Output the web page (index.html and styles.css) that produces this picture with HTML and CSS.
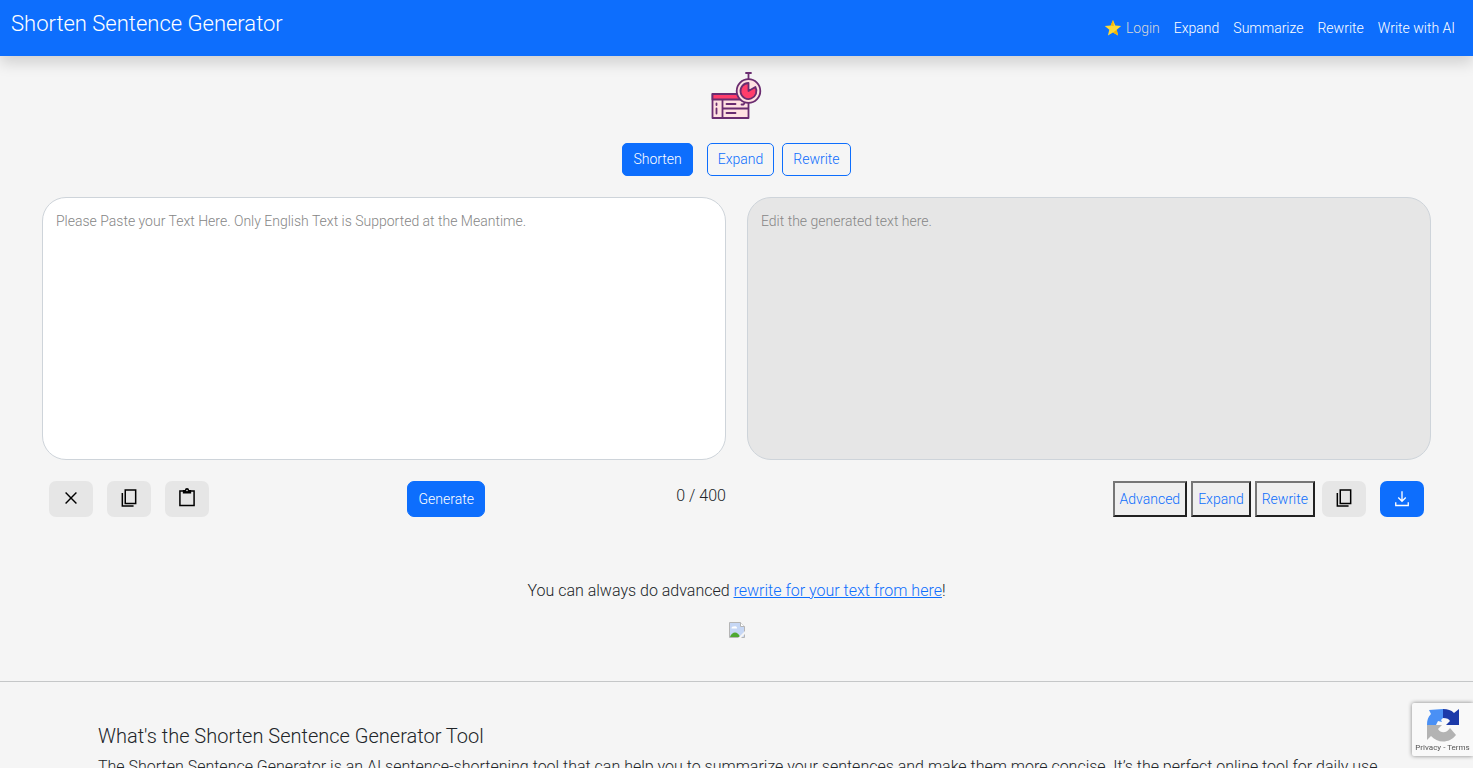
FILE: index.html
```html
<!DOCTYPE html>
<html lang="en">
<head>
  <meta charset="UTF-8">
  <meta name="viewport" content="width=device-width, initial-scale=1.0">
  <title>Shorten Sentence Generator</title>
  <link rel="stylesheet" href="styles.css">
</head>
<body>
  <header class="navbar">
    <a class="brand" href="#">Shorten Sentence Generator</a>
    <nav class="nav-links">
      <a class="login" href="#">
        <svg class="star" viewBox="0 0 18 18" aria-hidden="true"><path d="M9 1l2.3 5.4 5.9.5-4.5 3.8 1.4 5.8L9 13.4l-5.1 3.1 1.4-5.8L.8 6.9l5.9-.5z" fill="#fdd835"/><path d="M9 1l.8 5.900-3.100-.500zM12.700 10.700l1.400 5.800L9 13.400z" fill="#f4b400"/></svg>
        Login
      </a>
      <a href="#">Expand</a>
      <a href="#">Summarize</a>
      <a href="#">Rewrite</a>
      <a href="#">Write with AI</a>
    </nav>
  </header>

  <main>
    <svg class="logo" viewBox="0 0 52 50" aria-hidden="true">
      <g stroke="#6a2c70" stroke-width="1.8" stroke-linejoin="round">
        <path d="M1.500 24h36v24h-36z" fill="#ffe1e1"/>
        <path d="M1.500 24h36v5.500h-36z" fill="#ff3d6b"/>
        <path d="M11.500 29.500V48M11.500 38.500h26" fill="none"/>
        <path d="M5.500 33.500v1.500M5.500 38.500v5M15.500 34h9M15.500 43h9M30.500 34.500h2l1-1.500" fill="none" stroke-linecap="round"/>
        <path d="M37.500 9V3M35 3h5" fill="none" stroke-linecap="round"/>
        <circle cx="37.500" cy="21" r="11.800" fill="#ffe1e1"/>
        <path d="M37.500 21v-8a8 8 0 1 0 6.900 4z" fill="#ff3d6b"/>
      </g>
    </svg>

    <div class="modes">
      <button type="button" class="btn btn-primary">Shorten</button>
      <div class="mode-pair">
        <button type="button" class="btn btn-outline">Expand</button>
        <button type="button" class="btn btn-outline">Rewrite</button>
      </div>
    </div>

    <div class="editors">
      <section class="editor">
        <textarea class="text-box" id="inputText" aria-label="Text to shorten" placeholder="Please Paste your Text Here. Only English Text is Supported at the Meantime."></textarea>
        <div class="toolbar">
          <div class="tools">
            <button type="button" class="icon-btn" aria-label="Clear">
              <svg viewBox="0 0 24 24"><path d="M5.500 5.500l13 13M18.500 5.500l-13 13" stroke-width="1.700"/></svg>
            </button>
            <button type="button" class="icon-btn" aria-label="Copy">
              <svg viewBox="0 0 24 24"><path d="M7.500 2.500h12.500v16H7.500zM4 6v15.500h13.500" stroke-width="1.800"/></svg>
            </button>
            <button type="button" class="icon-btn" aria-label="Paste">
              <svg viewBox="0 0 24 24"><path d="M3.500 3.500h17v17.500h-17z" stroke-width="1.800"/><path d="M7 2.500h2.500a2.500 2.500 0 0 1 5 0H17v4H7z" fill="#000" stroke="none"/><circle cx="12" cy="3" r="1" fill="#e6e6e6" stroke="none"/></svg>
            </button>
          </div>
          <button type="button" class="btn btn-primary btn-tall">Generate</button>
          <span class="counter">0 / 400</span>
        </div>
      </section>

      <section class="editor">
        <textarea class="text-box text-box-result" id="outputText" aria-label="Generated text" placeholder="Edit the generated text here."></textarea>
        <div class="toolbar toolbar-end">
          <div class="actions">
            <button type="button" class="plain-btn">Advanced</button>
            <button type="button" class="plain-btn">Expand</button>
            <button type="button" class="plain-btn">Rewrite</button>
          </div>
          <div class="tools">
            <button type="button" class="icon-btn" aria-label="Copy result">
              <svg viewBox="0 0 24 24"><path d="M7.500 2.500h12.500v16H7.500zM4 6v15.500h13.500" stroke-width="1.800"/></svg>
            </button>
            <button type="button" class="icon-btn icon-btn-primary" aria-label="Download">
              <svg viewBox="0 0 24 24"><path d="M12 4v12M7.500 11.500l4.500 4.500 4.500-4.500M4.500 17v4h15v-4" stroke-width="1.600"/></svg>
            </button>
          </div>
        </div>
      </section>
    </div>

    <p class="hint">You can always do advanced <a href="#">rewrite for your text from here</a>!</p>
    <!-- missing banner placeholder -->
    <svg class="banner" viewBox="0 0 16 16" aria-hidden="true">
      <path d="M.5.500h11l4 4v11H.5z" fill="#c6d7f5" stroke="#b5b5b5"/>
      <path d="M11.500.500v4h4" fill="#fff" stroke="#b5b5b5"/>
      <path d="M2.500 6.500a2 2 0 0 1 2.500-2 2 2 0 0 1 3 2z" fill="#fff"/>
      <path d="M1 15c2-6 8-6 10 0z" fill="#4ea832"/>
      <path d="M9 16l7-7v3l-4 4z" fill="#f5f5f5"/>
    </svg>
  </main>

  <hr class="divider">

  <article class="about">
    <h2>What's the Shorten Sentence Generator Tool</h2>
    <p>The Shorten Sentence Generator is an AI sentence-shortening tool that can help you to summarize your sentences and make them more concise. It’s the perfect online tool for daily use</p>
  </article>

  <aside class="captcha">
    <svg viewBox="0 0 34 34" aria-hidden="true">
      <path d="M17 1v9l-2 2 1 2-4-1-2 4H1c0-5 1-8 4-11L3 2z" fill="#4a90f5"/>
      <path d="M17 1c5 0 8 1 11 4l5-4v16H20l4-4c-1-2-3-3-7-3z" fill="#1c3aa9"/>
      <path d="M1 17h15l-4 4c3 5 9 4 12-1l6 7C23 36 11 35 5 28l-4 4z" fill="#b3b3b3"/>
    </svg>
    <div class="captcha-links"><a href="#">Privacy</a> - <a href="#">Terms</a></div>
  </aside>
</body>
</html>
```
FILE: styles.css
```css
* {
  box-sizing: border-box;
}

body {
  margin: 0;
  height: 100vh;
  overflow: hidden;
  background: #f5f5f5;
  color: #212529;
  font-family: Roboto, "Liberation Sans", Arial, sans-serif;
  font-size: 14px;
  font-weight: 350;
  line-height: 21px;
}

button, textarea {
  font: inherit;
}

button {
  cursor: pointer;
}

a {
  color: #0d6efd;
}

.navbar {
  display: flex;
  justify-content: space-between;
  height: 56px;
  padding: 7px 18px 7px 11px;
  background: #0d6efd;
  box-shadow: 0 7px 14px rgba(0, 0, 0, 0.15);
}

.navbar a {
  color: #fff;
  text-decoration: none;
}

.navbar .brand {
  font-size: 22px;
  line-height: 34px;
}

.nav-links {
  display: flex;
  align-items: center;
  gap: 14px;
}

.navbar .login {
  display: flex;
  align-items: center;
  gap: 4px;
  color: #d8d8d8;
}

.star {
  width: 18px;
  height: 18px;
}

main {
  display: flex;
  flex-direction: column;
  align-items: center;
  padding: 14px 42px 0;
}

.logo {
  width: 52px;
  height: 50px;
}

.modes {
  display: flex;
  gap: 14px;
  margin-top: 23px;
}

.mode-pair {
  display: flex;
  gap: 8px;
}

.btn {
  padding: 5px 10px;
  border: 1px solid #0d6efd;
  border-radius: 5px;
}

.btn-primary {
  background: #0d6efd;
  color: #fff;
}

.btn-outline {
  background: transparent;
  color: #0d6efd;
}

.btn-tall {
  height: 36px;
  border-radius: 7px;
}

.editors {
  display: grid;
  grid-template-columns: 1fr 1fr;
  gap: 21px;
  width: 100%;
  margin-top: 21px;
}

.text-box {
  display: block;
  width: 100%;
  height: 263px;
  padding: 13px;
  border: 1px solid #ced4da;
  border-radius: 24px;
  background: #fff;
  resize: none;
}

.text-box-result {
  background: #e6e6e6;
}

.text-box::placeholder {
  color: #868686;
}

.toolbar {
  display: flex;
  justify-content: space-between;
  align-items: flex-start;
  margin-top: 21px;
  padding-left: 7px;
}

.toolbar-end {
  justify-content: flex-end;
  gap: 7px;
  padding-right: 7px;
}

.tools {
  display: flex;
  gap: 14px;
  padding-right: 7px;
}

.toolbar-end .tools {
  padding-right: 0;
}

.actions {
  display: flex;
  gap: 4px;
}

.icon-btn {
  display: flex;
  justify-content: center;
  width: 44px;
  height: 36px;
  padding: 7px 0;
  border: none;
  border-radius: 7px;
  background: #e6e6e6;
  color: #000;
}

.icon-btn svg {
  width: 20px;
  height: 20px;
  fill: none;
  stroke: currentColor;
}

.icon-btn-primary {
  background: #0d6efd;
  color: #fff;
}

.plain-btn {
  height: 36px;
  padding: 1px 5px;
  border: 2px solid;
  border-color: #767676 #212121 #212121 #767676;
  background: #efefef;
  color: #0d6efd;
}

.counter {
  padding-top: 4px;
  font-size: 16px;
}

.hint {
  margin: 62px 0 0;
  font-size: 16px;
  line-height: 24px;
}

.banner {
  width: 16px;
  height: 16px;
  margin-top: 19px;
}

.divider {
  margin: 43px 0 0;
  border: 0;
  border-top: 1px solid #c5c7c8;
}

.about {
  padding: 41px 70px 0 98px;
}

.about h2 {
  margin: 0 0 6px;
  font-size: 20px;
  font-weight: 350;
  line-height: 26px;
}

.about p {
  margin: 0;
  font-size: 16px;
  line-height: 24px;
}

.captcha {
  position: fixed;
  right: 0;
  bottom: 12px;
  width: 61px;
  height: 53px;
  padding-top: 5px;
  border-radius: 2px 0 0 2px;
  background: #f9f9f9;
  box-shadow: 0 0 4px #808080;
  text-align: center;
}

.captcha svg {
  display: block;
  width: 34px;
  height: 34px;
  margin: 0 auto;
}

.captcha-links {
  font-size: 8px;
  font-weight: 400;
  line-height: 12px;
  color: #555;
}

.captcha-links a {
  color: #555;
  text-decoration: none;
}
```
